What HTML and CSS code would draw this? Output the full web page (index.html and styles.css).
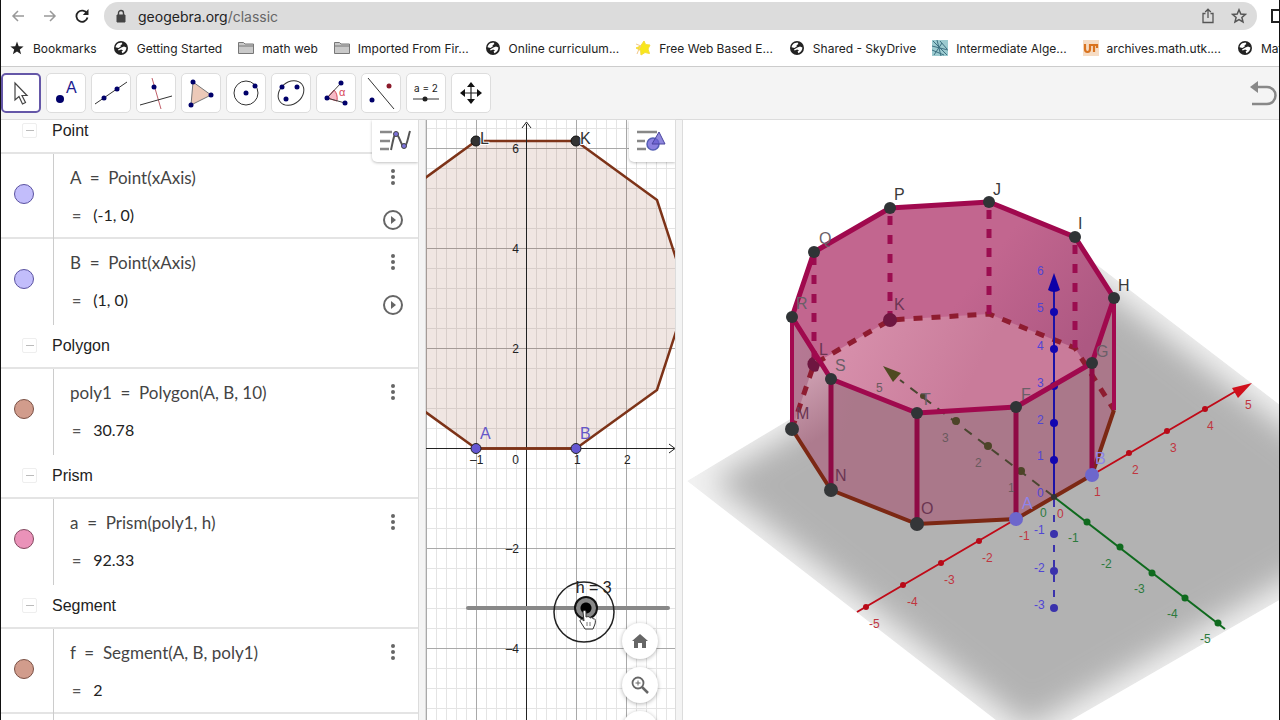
FILE: index.html
```html
<!DOCTYPE html>
<html lang="en">
<head>
    <meta charset="UTF-8">
    <meta name="viewport" content="width=device-width, initial-scale=1.0">
    <title>GeoGebra Classic</title>
    <link rel="stylesheet" href="styles.css">
</head>
<body>
    <!-- shared icons -->
    <svg class="defs" aria-hidden="true">
        <symbol id="globe" viewBox="0 0 16 16">
            <circle cx="8" cy="8" r="7" fill="#222"/>
            <path d="M5.2 3.2 8.6 2.4 9.4 4 7.6 5.2 7.8 6.6 5.4 8 2.6 7.2C2.8 5.4 3.8 4 5.2 3.2ZM8.4 7.4 11 6.6 13.4 7.6C13.4 10 11.8 12.4 9.4 13.2L8.6 11.4 10 10.4 8.2 9.4 5.6 10.4 5 9.4Z" fill="#fff"/>
        </symbol>
        <symbol id="folder" viewBox="0 0 16 16">
            <path d="M.5 13.5V2.5H5.5L7 4H15.5V13.5ZM.5 6H15.5" fill="#c9c9c9" stroke="#777"/>
        </symbol>
        <symbol id="dots" viewBox="0 0 8 18">
            <g fill="#666"><circle cx="4" cy="3" r="2"/><circle cx="4" cy="9" r="2"/><circle cx="4" cy="15" r="2"/></g>
        </symbol>
        <symbol id="play" viewBox="0 0 22 22">
            <circle cx="11" cy="11" r="9" fill="none" stroke="#666" stroke-width="2"/>
            <path d="M9 7V15L14 11Z" fill="#666"/>
        </symbol>
    </svg>

    <header class="browser">
        <div class="address-row">
            <button class="nav" aria-label="Back"><svg width="14" height="14" viewBox="0 0 14 14"><path d="M13 7H2M7 2 2 7 7 12" fill="none" stroke="#999" stroke-width="1.5"/></svg></button>
            <button class="nav" aria-label="Forward"><svg width="14" height="14" viewBox="0 0 14 14"><path d="M1 7H12M7 2 12 7 7 12" fill="none" stroke="#999" stroke-width="1.5"/></svg></button>
            <button class="nav" aria-label="Reload"><svg width="14" height="14" viewBox="0 0 14 14"><path d="M12 4.5A5.6 5.6 0 1 0 12.5 8.5" fill="none" stroke="#222" stroke-width="1.8"/><path d="M13.5 0V6H7.8Z" fill="#222"/></svg></button>
            <div class="address">
                <svg width="10" height="14" viewBox="0 0 10 14"><path d="M1 6H9V13H1Z" fill="#444" stroke="#444"/><path d="M2.5 6V4A2.5 2.5 0 0 1 7.5 4V6" fill="none" stroke="#444" stroke-width="1.4"/></svg>
                <a href="#" class="url">geogebra.org<span>/classic</span></a>
                <button class="small" aria-label="Share"><svg width="14" height="16" viewBox="0 0 14 16"><path d="M4.5 5.5H2V14.5H12V5.5H9.5M7 10V1.5M4.2 4 7 1.2 9.8 4" fill="none" stroke="#555" stroke-width="1.3"/></svg></button>
                <button class="small" aria-label="Bookmark this page"><svg width="16" height="16" viewBox="0 0 16 16"><path d="M8 1.8 9.8 6 14.4 6.4 10.9 9.4 12 13.9 8 11.5 4 13.9 5.1 9.4 1.6 6.4 6.2 6Z" fill="none" stroke="#555" stroke-width="1.5"/></svg></button>
            </div>
            <button class="small side" aria-label="Side panel"><svg width="16" height="14" viewBox="0 0 16 14"><path d="M1 1H15V13H1Z" fill="none" stroke="#222" stroke-width="2"/></svg></button>
        </div>
        <nav class="bookmarks">
            <a href="#"><svg viewBox="0 0 16 16"><path d="M8 1.5 9.7 6.2 14.6 6.4 10.8 9.4 12.1 14.2 8 11.4 3.9 14.2 5.2 9.4 1.4 6.4 6.3 6.2Z" fill="#222"/></svg>Bookmarks</a>
            <a href="#"><svg><use href="#globe"/></svg>Getting Started</a>
            <a href="#"><svg><use href="#folder"/></svg>math web</a>
            <a href="#"><svg><use href="#folder"/></svg>Imported From Fir...</a>
            <a href="#"><svg><use href="#globe"/></svg>Online curriculum...</a>
            <a href="#"><svg viewBox="0 0 16 16"><path d="M9 1 10.6 4.6 15 5 13 9 14.5 13.5 10 12.5 6 15 5.6 10.5 1 8 5.6 6Z" fill="#f8e71c" stroke="#f6dc3a"/><path d="M1 4 6 6 4 9 2 14" fill="none" stroke="#f3c98a"/></svg>Free Web Based E...</a>
            <a href="#"><svg><use href="#globe"/></svg>Shared - SkyDrive</a>
            <a href="#"><svg viewBox="0 0 16 16"><path d="M0 0H16V16H0Z" fill="#9ccbd0"/><path d="M1 1 15 15M5 0 9 16M0 6 16 10M2 15 10 3M8 1 15 9M0 10 12 15" fill="none" stroke="#3c6f80"/></svg>Intermediate Alge...</a>
            <a href="#"><svg viewBox="0 0 16 16"><path d="M0 0H16V16H0Z" fill="#f6dcc4"/><path d="M2 4V9Q2 12 4.500 12T7 9V4M7 5H14M11 5V12M14 4V8" fill="none" stroke="#d9731f" stroke-width="2.2"/></svg>archives.math.utk....</a>
            <a href="#"><svg><use href="#globe"/></svg>Mat</a>
        </nav>
    </header>

    <div class="toolbar">
        <button class="tool active" aria-label="Move"><svg viewBox="0 0 40 40"><path d="M14 10V27L18 23.500 21.500 31 24.500 29.500 21 22.500H26Z" fill="#fff" stroke="#444" stroke-width="1.2"/></svg></button>
        <button class="tool" aria-label="Point"><svg viewBox="0 0 40 40"><circle cx="14" cy="26" r="4" fill="#00006a"/><text x="20" y="20" class="tool-a">A</text></svg></button>
        <button class="tool" aria-label="Line"><svg viewBox="0 0 40 40"><path d="M4 31 36 9" stroke="#333"/><g fill="#00006a"><circle cx="13" cy="25" r="2.500"/><circle cx="26" cy="16" r="2.500"/></g></svg></button>
        <button class="tool" aria-label="Perpendicular line"><svg viewBox="0 0 40 40"><path d="M16 5 25 36" stroke="#c0606a"/><path d="M4 32 36 23" stroke="#333"/><circle cx="18" cy="14" r="2.500" fill="#00006a"/></svg></button>
        <button class="tool" aria-label="Polygon"><svg viewBox="0 0 40 40"><path d="M12 9 30 22 10 32Z" fill="#ecc9b8" stroke="#777"/><g fill="#00006a"><circle cx="12" cy="9" r="2.500"/><circle cx="30" cy="22" r="2.500"/><circle cx="10" cy="32" r="2.500"/></g></svg></button>
        <button class="tool" aria-label="Circle"><svg viewBox="0 0 40 40"><circle cx="20" cy="20" r="12" fill="none" stroke="#333"/><g fill="#00006a"><circle cx="20" cy="20" r="2.500"/><circle cx="29" cy="13" r="2.500"/></g></svg></button>
        <button class="tool" aria-label="Ellipse"><svg viewBox="0 0 40 40"><ellipse cx="20" cy="20" rx="14" ry="11" fill="none" stroke="#333" transform="rotate(-40 20 20)"/><g fill="#00006a"><circle cx="11" cy="14" r="2.500"/><circle cx="26" cy="14" r="2.500"/><circle cx="15" cy="26" r="2.500"/></g></svg></button>
        <button class="tool" aria-label="Angle"><svg viewBox="0 0 40 40"><path d="M11 25 18 17Q22 21 21 28Z" fill="#f7b9c4" stroke="#d8485a"/><path d="M25 10 11 25 29 30" fill="none" stroke="#444"/><g fill="#00006a"><circle cx="25" cy="10" r="2.500"/><circle cx="11" cy="25" r="2.500"/><circle cx="29" cy="30" r="2.500"/></g><text x="23" y="23" class="tool-alpha">α</text></svg></button>
        <button class="tool" aria-label="Reflect"><svg viewBox="0 0 40 40"><path d="M7 5 33 36" stroke="#333"/><circle cx="11" cy="27" r="2.500" fill="#00006a"/><circle cx="28" cy="13" r="2.500" fill="#8b1a2b"/></svg></button>
        <button class="tool" aria-label="Slider"><svg viewBox="0 0 40 40"><text x="8" y="19" class="tool-s">a = 2</text><path d="M7 26H33" stroke="#333"/><circle cx="19" cy="26" r="2.500" fill="#222"/></svg></button>
        <button class="tool" aria-label="Move view"><svg viewBox="0 0 40 40"><path d="M20 12V28M12 20H28" stroke="#222" stroke-width="1.2"/><path d="M20 9 24 14H16ZM20 31 24 26H16ZM9 20 14 16V24ZM31 20 26 16V24Z" fill="#111"/></svg></button>
        <button class="undo" aria-label="Undo"><svg width="28" height="26" viewBox="0 0 28 26"><path d="M6 7H18A8 8 0 0 1 18 24H3" fill="none" stroke="#888" stroke-width="2.500"/><path d="M1 7 9 1V13Z" fill="#888"/></svg></button>
    </div>

    <main class="views">
        <section class="algebra">
            <div class="algebra-list">
                <h2><button class="fold" aria-label="Collapse Point"></button>Point</h2>
                <div class="row">
                    <div class="marble blue"></div>
                    <div class="def"><p>A&nbsp; =&nbsp; Point(xAxis)</p><p class="val"><b>=</b>(-1, 0)</p></div>
                    <div class="controls"><button aria-label="More"><svg width="8" height="18"><use href="#dots"/></svg></button><button aria-label="Play"><svg width="22" height="22"><use href="#play"/></svg></button></div>
                </div>
                <div class="row">
                    <div class="marble blue"></div>
                    <div class="def"><p>B&nbsp; =&nbsp; Point(xAxis)</p><p class="val"><b>=</b>(1, 0)</p></div>
                    <div class="controls"><button aria-label="More"><svg width="8" height="18"><use href="#dots"/></svg></button><button aria-label="Play"><svg width="22" height="22"><use href="#play"/></svg></button></div>
                </div>
                <h2><button class="fold" aria-label="Collapse Polygon"></button>Polygon</h2>
                <div class="row">
                    <div class="marble brown"></div>
                    <div class="def"><p>poly1&nbsp; =&nbsp; Polygon(A, B, 10)</p><p class="val"><b>=</b>30.78</p></div>
                    <div class="controls"><button aria-label="More"><svg width="8" height="18"><use href="#dots"/></svg></button></div>
                </div>
                <h2><button class="fold" aria-label="Collapse Prism"></button>Prism</h2>
                <div class="row">
                    <div class="marble pink"></div>
                    <div class="def"><p>a&nbsp; =&nbsp; Prism(poly1, h)</p><p class="val"><b>=</b>92.33</p></div>
                    <div class="controls"><button aria-label="More"><svg width="8" height="18"><use href="#dots"/></svg></button></div>
                </div>
                <h2><button class="fold" aria-label="Collapse Segment"></button>Segment</h2>
                <div class="row">
                    <div class="marble brown"></div>
                    <div class="def"><p>f&nbsp; =&nbsp; Segment(A, B, poly1)</p><p class="val"><b>=</b>2</p></div>
                    <div class="controls"><button aria-label="More"><svg width="8" height="18"><use href="#dots"/></svg></button></div>
                </div>
                <div class="row"><div class="marble brown"></div><div class="def"></div></div>
            </div>
            <button class="style-btn" aria-label="Algebra style"><svg width="32" height="24" viewBox="0 0 32 24"><path d="M1 3H13M1 12H11M1 20H10" stroke="#888" stroke-width="2.500"/><path d="M12 21C14 12 15 5 17 5 20 5 22 17 25 18 28 18 29 8 31 2" fill="none" stroke="#555" stroke-width="2"/><g fill="#7b71d8" stroke="#444"><circle cx="17" cy="5" r="2.500"/><circle cx="25" cy="17" r="2.500"/></g></svg></button>
        </section>

        <section class="graphics">
            <svg class="canvas" viewBox="426 120 250 600" preserveAspectRatio="xMinYMin slice">
                <defs>
                    <pattern id="minor" x="426" y="148" width="10" height="20" patternUnits="userSpaceOnUse"><path d="M.5 0V20M0 .5H10" fill="none" stroke="#e4e4e4"/></pattern>
                </defs>
                <rect x="426" y="120" width="250" height="600" fill="url(#minor)"/>
                <path d="M426.500 120V720M476.500 120V720M576.500 120V720M626.500 120V720M426 148.500H676M426 248.500H676M426 348.500H676M426 548.500H676M426 648.500H676" stroke="#a9a9a9"/>
                <path d="M476 448.500 395 390 364 295 395 200 476 141H576L657 200 688 295 657 390 576 448.500Z" fill="#8a4020" fill-opacity=".13" stroke="#7d3318" stroke-width="2.500"/>
                <path d="M526.500 124V720M522 128 526.500 122 531 128M426 448.500H674M669 444 675 448.500 669 453" fill="none" stroke="#222"/>
                <path d="M478 448.500H574" stroke="#7d3318" stroke-width="2.500"/>
                <g fill="#333" stroke="#111"><circle cx="476" cy="141" r="5"/><circle cx="576" cy="141" r="5"/></g>
                <g fill="#6557d2" stroke="#222"><circle cx="476" cy="448.500" r="5"/><circle cx="576" cy="448.500" r="5"/></g>
                <g class="name halo"><text x="480" y="144">L</text><text x="580" y="144">K</text></g>
                <g class="name point"><text x="480" y="439">A</text><text x="580" y="439">B</text></g>
                <g class="tick"><text x="519" y="153" class="end">6</text><text x="519" y="253" class="end">4</text><text x="519" y="353" class="end">2</text><text x="519" y="464" class="end">0</text><text x="519" y="553" class="end">–2</text><text x="519" y="653" class="end">–4</text><text x="470" y="464">–1</text><text x="574" y="464">1</text><text x="624" y="464">2</text></g>
            </svg>
            <label class="slider-label" for="h">h = 3</label>
            <input class="slider" id="h" type="range" min="0" max="5" value="3">
            <svg class="pointer" width="64" height="64" viewBox="0 0 64 64"><circle cx="32" cy="32" r="30" fill="none" stroke="#222" stroke-width="1.500"/><path d="M31 32C31 30 34 30 34 32V37C37 36 38 37 38 38 40 37 41 38 41 39 43 38 44 40 43 44L41 49H33L28 41C28 39 30 39 32 41Z" fill="#fff" stroke="#333"/><path d="M35 42V46M38 42V46" stroke="#777"/></svg>
            <button class="style-btn" aria-label="Graphics style"><svg width="32" height="24" viewBox="0 0 32 24"><path d="M1 3H21M1 12H9M1 20H10" stroke="#888" stroke-width="2.500"/><circle cx="17" cy="15" r="6" fill="#8b81e0" stroke="#555fb5" stroke-width="1.500"/><path d="M23 3 29 15H16Z" fill="#6a5fd0" fill-opacity=".75" stroke="#4a45a0"/></svg></button>
            <div class="zoom">
                <button aria-label="Standard view"><svg width="20" height="20" viewBox="0 0 20 20"><path d="M10 3 18 10H16V17H12V12H8V17H4V10H2Z" fill="#666"/></svg></button>
                <button aria-label="Zoom in"><svg width="20" height="20" viewBox="0 0 20 20"><circle cx="8" cy="8" r="5.500" fill="none" stroke="#666" stroke-width="1.800"/><path d="M12 12 18 18" stroke="#666" stroke-width="2.500"/><path d="M8 5.500V10.500M5.500 8H10.500" stroke="#666"/></svg></button>
                <button aria-label="Zoom out"></button>
            </div>
        </section>

        <section class="graphics3d">
            <svg class="canvas" viewBox="683 120 596 600" preserveAspectRatio="xMinYMin slice">
                <defs>
                    <filter id="soft" x="-10%" y="-10%" width="120%" height="120%"><feGaussianBlur stdDeviation="15"/></filter>
                    <clipPath id="plane"><path d="M687 481 1075 248 1425 516 1028 745Z"/></clipPath>
                    <clipPath id="opening"><path d="M890 208 989 202 1075 237 1114 298 1092 363 1016 407 917 413 831 379 792 317 814 252Z"/></clipPath>
                    <linearGradient id="wall" x1="0" y1="0" x2="1" y2=".5"><stop offset=".6" stop-color="#c2668f"/><stop offset="1" stop-color="#ad5882"/></linearGradient>
                    <linearGradient id="floor" x1="0" y1="0" x2="1" y2=".3"><stop offset=".1" stop-color="#d993ae"/><stop offset=".6" stop-color="#c97b9a"/></linearGradient>
                    <linearGradient id="front" x1="0" y1="0" x2="1" y2=".3"><stop offset="0" stop-color="#bd789a"/><stop offset=".35" stop-color="#aa788a"/></linearGradient>
                    <linearGradient id="light" x1="0" y1="0" x2=".2" y2="1"><stop offset="0" stop-color="#d6a8ba"/><stop offset=".7" stop-color="#ad7b8e"/></linearGradient>
                </defs>
                <!-- xy plane -->
                <g clip-path="url(#plane)">
                    <path d="M687 481 1075 248 1425 516 1028 745Z" fill="#f2f2f2"/>
                    <path d="M712 481 1075 268 1398 515 1028 728Z" fill="#b2b2b2" filter="url(#soft)"/>
                </g>
                <!-- prism faces -->
                <path d="M792 317 814 252 890 208 989 202 1075 237 1114 298V410L1092 475 1016 519 917 524 831 490 792 429Z" fill="url(#front)"/>
                <path d="M890 208 989 202 1075 237 1114 298 1092 363 1016 407 917 413 831 379 792 317 814 252Z" fill="url(#wall)"/>
                <path d="M890 320 989 314 1075 348 1114 410 1092 475 1016 519 917 524 831 490 792 429 814 364Z" fill="url(#floor)" clip-path="url(#opening)"/>
                <path d="M814 364 824 368 831 379V490L792 429Z" fill="url(#light)"/>
                <!-- hidden edges -->
                <path d="M792 429 814 364 890 320 989 314 1075 348 1114 410" fill="none" stroke="#8e1c30" stroke-width="5" stroke-dasharray="9 9"/>
                <path d="M814 256V364M890 216V320M989 210V314M1075 245V348" stroke="#9b0d50" stroke-width="5" stroke-dasharray="9 10"/>
                <!-- y axis, hidden part -->
                <path d="M1053 496 900 380" stroke="#4a4630" stroke-width="2" stroke-dasharray="9 8"/>
                <path d="M883 366 901 373 893 382Z" fill="#4f4a22"/>
                <g fill="#4d4428"><circle cx="923" cy="396" r="3"/><circle cx="956" cy="421" r="4"/><circle cx="988" cy="446" r="4"/><circle cx="1021" cy="471" r="4"/></g>
                <!-- base edges -->
                <path d="M792 429 831 490 917 524 1016 519 1092 475 1114 410" fill="none" stroke="#7c2814" stroke-width="4"/>
                <!-- red x axis -->
                <path d="M857 612 1016 519M1092 475 1236 391" stroke="#c00a18" stroke-width="2"/>
                <path d="M1252 383 1232 388 1238 398Z" fill="#d0101c"/>
                <g fill="#b80a18"><circle cx="866" cy="607" r="3"/><circle cx="903" cy="585" r="3"/><circle cx="941" cy="563" r="3"/><circle cx="979" cy="541" r="3"/><circle cx="1129" cy="453" r="3"/><circle cx="1167" cy="431" r="3"/><circle cx="1205" cy="409" r="3"/></g>
                <!-- green axis -->
                <path d="M1054 497 1225 629" stroke="#0f6a1e" stroke-width="2"/>
                <g fill="#0f6a1e"><circle cx="1087" cy="522" r="3.500"/><circle cx="1120" cy="547" r="3.500"/><circle cx="1152" cy="573" r="3.500"/><circle cx="1185" cy="598" r="3.500"/><circle cx="1218" cy="623" r="3.500"/></g>
                <!-- blue z axis -->
                <path d="M1054 290V497" stroke="#1c12a8" stroke-width="2"/>
                <path d="M1054 500V608" stroke="#3a32ac" stroke-width="2" stroke-dasharray="7 8"/>
                <path d="M1054 273 1060 290Q1054 294 1048 290Z" fill="#0c00a8"/>
                <g fill="#1206b0"><circle cx="1054" cy="312" r="4"/><circle cx="1054" cy="349" r="4"/><circle cx="1054" cy="386" r="4"/><circle cx="1054" cy="423" r="4"/><circle cx="1054" cy="460" r="4"/></g>
                <g fill="#3a32ac"><circle cx="1054" cy="534" r="4"/><circle cx="1054" cy="571" r="4"/><circle cx="1054" cy="608" r="4"/></g>
                <circle cx="1054" cy="497" r="3" fill="#333"/>
                <!-- visible edges -->
                <path d="M831 379V490M917 413V524M1016 407V519M1092 363V475" stroke="#8f0a45" stroke-width="5"/>
                <path d="M792 317V429M1114 298V410" stroke="#a30a50" stroke-width="4"/>
                <path d="M890 208 989 202 1075 237 1114 298 1092 363 1016 407 917 413 831 379 792 317 814 252Z" fill="none" stroke="#a0094e" stroke-width="5" stroke-linejoin="round"/>
                <!-- vertices -->
                <g fill="#6e1640"><circle cx="890" cy="320" r="7"/><path d="M818 371A7 7 0 1 1 812 357L820 365Z"/></g>
                <g fill="#343638"><circle cx="792" cy="429" r="7"/><circle cx="831" cy="490" r="7"/><circle cx="917" cy="524" r="7"/></g>
                <g fill="#6d67cc"><circle cx="1016" cy="519" r="7"/><circle cx="1092" cy="475" r="7"/></g>
                <g fill="#303436"><circle cx="890" cy="208" r="6"/><circle cx="989" cy="202" r="6"/><circle cx="1075" cy="237" r="6"/><circle cx="1114" cy="298" r="6"/><circle cx="1092" cy="363" r="6"/><circle cx="1016" cy="407" r="6"/><circle cx="917" cy="413" r="6"/><circle cx="831" cy="379" r="6"/><circle cx="792" cy="317" r="6"/><circle cx="814" cy="252" r="6"/></g>
                <g class="name dark"><text x="894" y="200">P</text><text x="993" y="195">J</text><text x="1078" y="229">I</text><text x="1118" y="291">H</text></g>
                <g class="name mid"><text x="819" y="244">Q</text><text x="796" y="309">R</text><text x="835" y="371">S</text><text x="921" y="405">T</text><text x="1021" y="400">F</text><text x="1096" y="357">G</text></g>
                <g class="name wine"><text x="894" y="310">K</text><text x="819" y="355">L</text><text x="796" y="419">M</text><text x="835" y="481">N</text><text x="921" y="514">O</text></g>
                <g class="name lilac"><text x="1022" y="509">A</text><text x="1095" y="464">B</text></g>
                <g class="num blue"><text x="1037" y="275">6</text><text x="1037" y="312">5</text><text x="1037" y="350">4</text><text x="1037" y="387">3</text><text x="1037" y="424">2</text><text x="1037" y="460">1</text><text x="1037" y="497">0</text><text x="1034" y="534">-1</text><text x="1034" y="572">-2</text><text x="1034" y="609">-3</text></g>
                <g class="num red"><text x="869" y="628">-5</text><text x="907" y="606">-4</text><text x="944" y="584">-3</text><text x="982" y="562">-2</text><text x="1019" y="540">-1</text><text x="1057" y="518">0</text><text x="1094" y="496">1</text><text x="1132" y="474">2</text><text x="1170" y="452">3</text><text x="1207" y="430">4</text><text x="1245" y="409">5</text></g>
                <g class="num green"><text x="1040" y="517">0</text><text x="1068" y="542">-1</text><text x="1101" y="568">-2</text><text x="1134" y="593">-3</text><text x="1167" y="618">-4</text><text x="1200" y="643">-5</text></g>
                <g class="num olive"><text x="1008" y="492">1</text><text x="975" y="467">2</text><text x="942" y="442">3</text><text x="876" y="392">5</text></g>
            </svg>
        </section>
    </main>
</body>
</html>
```
FILE: styles.css
```css
* {
    box-sizing: border-box;
}
body {
    margin: 0;
    height: 100vh;
    display: flex;
    flex-direction: column;
    overflow: hidden;
    border: solid #111;
    border-width: 0 1px;
    background: #fff;
    font-family: "Liberation Sans", Arial, sans-serif;
    color: #222;
}
button {
    padding: 0;
    border: 0;
    background: none;
    display: flex;
    align-items: center;
    justify-content: center;
}
.defs {
    position: absolute;
    width: 0;
    height: 0;
}

/* browser bars */
.browser {
    font-family: Inter, sans-serif;
    border-bottom: 1px solid #ccc;
    overflow: hidden;
}
.address-row {
    display: flex;
    align-items: center;
    gap: 8px;
    padding: 2px 0 0 5px;
}
.nav {
    width: 24px;
    height: 24px;
}
.address {
    flex: 1;
    display: flex;
    align-items: center;
    gap: 16px;
    height: 28px;
    margin-left: 2px;
    padding: 0 10px 0 12px;
    border-radius: 14px;
    background: #dcdcdc;
}
.url {
    flex: 1;
    margin-left: -4px;
    font-size: 14px;
    color: #222;
    text-decoration: none;
}
.url span {
    color: #666;
}
.side {
    margin: 0 -8px 0 6px;
}
.bookmarks {
    display: flex;
    gap: 16px;
    height: 36px;
    padding-left: 8px;
    align-items: center;
    white-space: nowrap;
}
.bookmarks a {
    display: flex;
    align-items: center;
    gap: 8px;
    font-size: 12px;
    color: #222;
    text-decoration: none;
}
.bookmarks svg {
    width: 16px;
    height: 16px;
}

/* tools */
.toolbar {
    display: flex;
    align-items: center;
    gap: 5px;
    height: 53px;
    border-bottom: 1px solid #d8d8d8;
    background: #f4f4f4;
}
.tool {
    width: 40px;
    height: 40px;
    border: 1px solid #ddd;
    border-radius: 5px;
    background: #fff;
}
.tool.active {
    border: 2px solid #6557a8;
}
.tool svg {
    width: 40px;
    height: 40px;
    flex: none;
}
.tool-a {
    font-size: 16px;
    fill: #1a1a90;
}
.tool-alpha {
    font-size: 11px;
    fill: #d8485a;
}
.tool-s {
    font: 10px Inter, sans-serif;
    fill: #222;
}
.undo {
    margin-left: auto;
    margin-right: 2px;
}

.views {
    flex: 1;
    min-height: 0;
    display: grid;
    grid-template-columns: 417fr 250fr 596fr;
    gap: 8px;
    background: #f4f4f4;
}
.views section {
    position: relative;
    overflow: hidden;
    background: #fff;
    box-shadow: 0 0 0 1px #dcdcdc;
}
.canvas {
    display: block;
    width: 100%;
    height: 100%;
}

/* algebra view */
.algebra-list {
    margin-top: -13px;
}
.algebra h2 {
    display: flex;
    align-items: center;
    gap: 15px;
    height: 45px;
    margin: 0;
    padding: 2px 0 0 21px;
    font-size: 16px;
    font-weight: normal;
}
.fold {
    width: 15px;
    height: 15px;
    border: 1px solid #eee;
    border-radius: 2px;
}
.fold::before {
    content: "";
    width: 8px;
    height: 1px;
    background: #bbb;
}
.row {
    display: grid;
    grid-template-columns: 52px 1fr 50px;
    height: 85px;
    border-top: 2px solid #e4e4e4;
}
.marble {
    width: 20px;
    height: 20px;
    margin: 30px 13px;
    border: 1px solid #555;
    border-radius: 50%;
}
.marble.blue {
    background: #c2bdfb;
    border-color: #5a52a0;
}
.marble.brown {
    background: #d19c8c;
    border-color: #7a5044;
}
.marble.pink {
    background: #ea92b9;
    border-color: #83485f;
}
.def {
    padding: 12px 0 0 16px;
    border-left: 1px solid #ccc;
    font-family: Lato, sans-serif;
    font-size: 17px;
    color: #444;
}
.def p {
    margin: 0 0 13px;
    line-height: 24px;
}
.def .val {
    display: flex;
    gap: 12px;
    padding-left: 2px;
    font-size: 16px;
    color: #222;
}
.val b {
    color: #555;
}
.controls {
    display: flex;
    flex-direction: column;
    align-items: center;
    gap: 23px;
    padding-top: 14px;
}
.style-btn {
    position: absolute;
    top: 0;
    right: 0;
    width: 46px;
    height: 42px;
    background: #fff;
    border-radius: 0 0 0 5px;
    box-shadow: 0 1px 3px rgba(0, 0, 0, 0.25);
}

/* graphics view */
.name {
    font-size: 16px;
    fill: #333;
}
.name.halo {
    stroke: #fff;
    stroke-width: 2px;
    paint-order: stroke;
}
.name.point {
    fill: #6557c8;
}
.tick {
    font-size: 12px;
    fill: #222;
}
.end {
    text-anchor: end;
}
.slider-label {
    position: absolute;
    left: 150px;
    top: 459px;
    font-size: 16px;
}
.slider {
    position: absolute;
    left: 40px;
    top: 476px;
    width: 204px;
    height: 24px;
    margin: 0;
    appearance: none;
    background: none;
}
.slider::-webkit-slider-runnable-track {
    height: 4px;
    border-radius: 2px;
    background: #888;
}
.slider::-webkit-slider-thumb {
    appearance: none;
    width: 24px;
    height: 24px;
    margin-top: -10px;
    border: 2px solid #111;
    border-radius: 50%;
    background: radial-gradient(circle, #000 5px, #888 6px);
}
.pointer {
    position: absolute;
    left: 126px;
    top: 460px;
}
.zoom {
    position: absolute;
    right: 17px;
    bottom: -27px;
    display: flex;
    flex-direction: column;
    gap: 8px;
}
.zoom button {
    width: 36px;
    height: 36px;
    border-radius: 50%;
    background: #fff;
    box-shadow: 0 1px 4px rgba(0, 0, 0, 0.3);
}

/* 3D view */
.name.dark {
    fill: #3a3a3a;
}
.name.mid {
    fill: #6b5f68;
}
.name.wine {
    fill: #6b3552;
}
.name.lilac {
    fill: #8d84ea;
}
.num {
    font-size: 12px;
}
.num.blue {
    fill: #5045d6;
}
.num.red {
    fill: #c0353f;
}
.num.green {
    fill: #2c7a3c;
}
.num.olive {
    fill: #6a5a5e;
}
```
